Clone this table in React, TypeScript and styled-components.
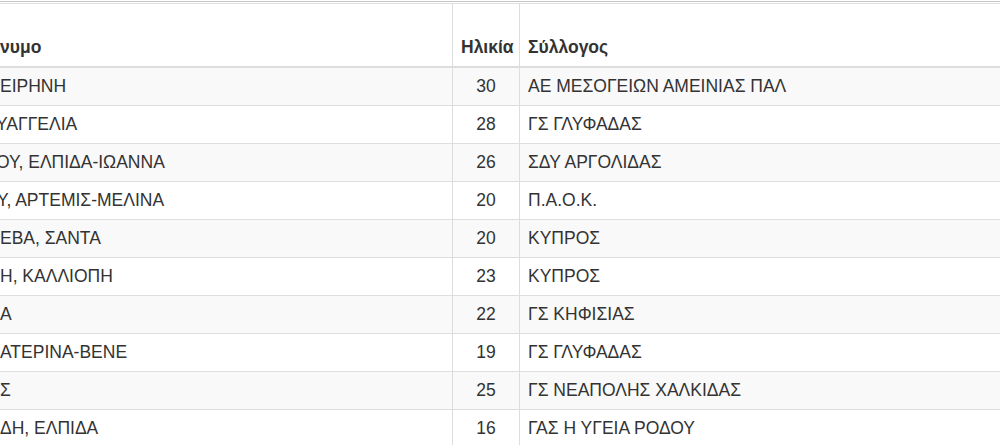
import React from 'react'
import styled, { createGlobalStyle } from 'styled-components'

const GlobalStyle = createGlobalStyle`
  html, body {
    margin: 0;
    padding: 0;
    background: #fff;
  }
  body {
    font-family: "Liberation Sans", Arial, Helvetica, sans-serif;
    font-size: 17.5px;
    color: #333;
  }
`

const Page = styled.div`
  width: 1000px;
  height: 445px;
  overflow: hidden;
  padding-top: 1px;
  box-sizing: border-box;
`

const Rule = styled.div`
  height: 1px;
  background: #c6c6c6;
  margin-bottom: 1px;
`

const Table = styled.table`
  width: 100%;
  border-collapse: separate;
  border-spacing: 0;
  table-layout: fixed;
  border-top: 1px solid #e0e0e0;
`

const Th = styled.th<{ $align?: string; $divider?: boolean }>`
  padding: 33px 8px 8px;
  line-height: 21px;
  font-weight: bold;
  text-align: ${({ $align }) => $align || 'left'};
  vertical-align: bottom;
  white-space: nowrap;
  border-bottom: 2px solid #ddd;
  border-left: ${({ $divider }) => ($divider ? '1px solid #ddd' : '0')};
`

const Row = styled.tr`
  &:nth-child(odd) {
    background: #f9f9f9;
  }
`

const Td = styled.td<{ $align?: string; $divider?: boolean }>`
  padding: 8px;
  line-height: 21px;
  text-align: ${({ $align }) => $align || 'left'};
  white-space: nowrap;
  overflow: hidden;
  border-bottom: 1px solid #ddd;
  border-left: ${({ $divider }) => ($divider ? '1px solid #ddd' : '0')};
`

const NameTh = styled(Th)`
  padding-left: 0;
`

const NameTd = styled(Td)`
  padding-left: 0;
`

// the name column is scrolled off the left edge, so names show cut
const Cut = styled.span<{ $shift: number }>`
  display: inline-block;
  margin-left: ${({ $shift }) => $shift}px;
`

const athletes = [
  { name: 'ΕΙΡΗΝΗ', shift: 0, age: 30, club: 'ΑΕ ΜΕΣΟΓΕΙΩΝ ΑΜΕΙΝΙΑΣ ΠΑΛ' },
  { name: 'ΥΑΓΓΕΛΙΑ', shift: -4, age: 28, club: 'ΓΣ ΓΛΥΦΑΔΑΣ' },
  { name: 'ΟΥ, ΕΛΠΙΔΑ-ΙΩΑΝΝΑ', shift: -4, age: 26, club: 'ΣΔΥ ΑΡΓΟΛΙΔΑΣ' },
  { name: 'Υ, ΑΡΤΕΜΙΣ-ΜΕΛΙΝΑ', shift: -3, age: 20, club: 'Π.Α.Ο.Κ.' },
  { name: 'ΕΒΑ, ΣΑΝΤΑ', shift: 0, age: 20, club: 'ΚΥΠΡΟΣ' },
  { name: 'Η, ΚΑΛΛΙΟΠΗ', shift: 0, age: 23, club: 'ΚΥΠΡΟΣ' },
  { name: 'Α', shift: 0, age: 22, club: 'ΓΣ ΚΗΦΙΣΙΑΣ' },
  { name: 'ΑΤΕΡΙΝΑ-ΒΕΝΕ', shift: 0, age: 19, club: 'ΓΣ ΓΛΥΦΑΔΑΣ' },
  { name: 'Σ', shift: 0, age: 25, club: 'ΓΣ ΝΕΑΠΟΛΗΣ ΧΑΛΚΙΔΑΣ' },
  { name: 'ΔΗ, ΕΛΠΙΔΑ', shift: 0, age: 16, club: 'ΓΑΣ Η ΥΓΕΙΑ ΡΟΔΟΥ' },
]

const App = () => (
  <Page>
    <GlobalStyle />
    <Rule />
    <Table>
      <colgroup>
        <col style={{ width: 452 }} />
        <col style={{ width: 67 }} />
        <col />
      </colgroup>
      <thead>
        <tr>
          <NameTh>νυμο</NameTh>
          <Th $align="center" $divider>Ηλικία</Th>
          <Th $divider>Σύλλογος</Th>
        </tr>
      </thead>
      <tbody>
        {athletes.map((a, i) => (
          <Row key={i}>
            <NameTd>
              <Cut $shift={a.shift}>{a.name}</Cut>
            </NameTd>
            <Td $align="center" $divider>{a.age}</Td>
            <Td $divider>{a.club}</Td>
          </Row>
        ))}
      </tbody>
    </Table>
  </Page>
)

export default App
